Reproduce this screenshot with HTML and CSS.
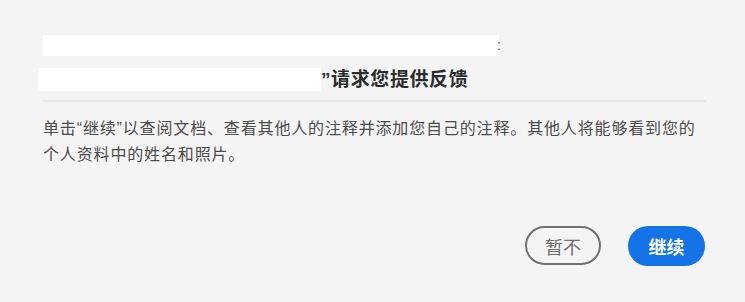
FILE: index.html
```html
<!DOCTYPE html>
<html lang="zh-CN">
<head>
<meta charset="utf-8">
<title>请求您提供反馈</title>
<link rel="stylesheet" href="styles.css">
</head>
<body>
<div class="dialog">
  <div class="heading">
    <div class="heading-line first">
      <span class="redact redact-a"></span><span class="colon">:</span>
    </div>
    <div class="heading-line second">
      <span class="redact redact-b"></span><h1 class="title">”请求您提供反馈</h1>
    </div>
  </div>
  <div class="divider"></div>
  <p class="message">单击“继续”以查阅文档、查看其他人的注释并添加您自己的注释。其他人将能够看到您的个人资料中的姓名和照片。</p>
  <div class="actions">
    <button class="btn btn-secondary">暂不</button>
    <button class="btn btn-primary">继续</button>
  </div>
</div>
</body>
</html>
```
FILE: styles.css
```css
html, body {
  margin: 0;
  padding: 0;
  background: #f4f4f4;
}
body {
  font-family: "Liberation Sans", "Noto Sans CJK SC", sans-serif;
  color: #4b4b4b;
}
.dialog {
  width: 663px;
  padding: 35px 0 0 43px;
}
.heading-line {
  display: flex;
  align-items: center;
}
.heading-line.first {
  height: 21px;
}
.heading-line.second {
  height: 23px;
  margin-top: 12px;
  margin-left: -5px;
}
.redact {
  display: block;
  background: #ffffff;
}
.redact-a {
  width: 456px;
  height: 21px;
}
.redact-b {
  width: 283px;
  height: 23px;
}
.colon {
  font-size: 14px;
  line-height: 21px;
  color: #666;
  margin-left: -2px;
}
.title {
  margin: 0;
  font-size: 19px;
  font-weight: 600;
  line-height: 23px;
  color: #2c2c2c;
  letter-spacing: 0.6px;
}
.divider {
  margin-top: 9px;
  height: 2px;
  background: #e8e8e8;
}
.message {
  margin: 14px 0 0;
  font-size: 16px;
  line-height: 26px;
  letter-spacing: 0.85px;
  color: #4b4b4b;
}
.actions {
  display: flex;
  justify-content: flex-end;
  gap: 27px;
  margin-top: 58px;
  padding-right: 1px;
}
.btn {
  font-family: "Liberation Sans", "Noto Sans CJK SC", sans-serif;
  font-size: 18px;
  border-radius: 20px;
  height: 40px;
  padding: 0;
  cursor: pointer;
}
.btn-secondary {
  width: 76px;
  background: transparent;
  border: 2px solid #707070;
  color: #6e6e6e;
  height: 39px;
}
.btn-primary {
  width: 77px;
  background: #1473e6;
  border: none;
  color: #ffffff;
  font-weight: 700;
}
```
